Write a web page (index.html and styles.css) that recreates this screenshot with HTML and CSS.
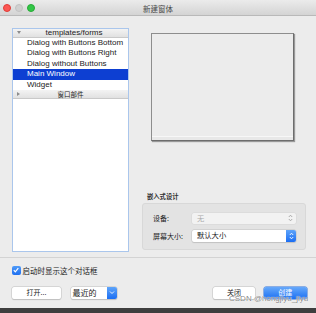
FILE: index.html
```html
<!DOCTYPE html>
<html lang="zh">
<head>
<meta charset="utf-8">
<title>新建窗体</title>
<link rel="stylesheet" href="styles.css">
</head>
<body>
<div class="window">
  <div class="titlebar">
    <div class="lights">
      <span class="light red"></span>
      <span class="light gray"></span>
      <span class="light green"></span>
    </div>
    <div class="title">新建窗体</div>
    <div></div>
  </div>

  <div class="main">
    <div class="list">
      <div class="list-header first"><span class="arrow down"></span><span class="header-text">templates/forms</span></div>
      <div class="row">Dialog with Buttons Bottom</div>
      <div class="row">Dialog with Buttons Right</div>
      <div class="row">Dialog without Buttons</div>
      <div class="row selected">Main Window</div>
      <div class="row">Widget</div>
      <div class="list-header"><span class="arrow right"></span><span class="header-text cjk">窗口部件</span></div>
    </div>

    <div class="side">
      <div class="preview"><div class="preview-status"></div></div>
      <div class="embed">
        <div class="embed-label">嵌入式设计</div>
        <div class="group">
          <div class="field">
            <span class="field-label">设备:</span>
            <div class="combo disabled">
              <span class="combo-text">无</span>
              <svg class="updown" width="5" height="8" viewBox="0 0 5 8"><path d="M0.8 3 L2.5 1.2 L4.2 3 M0.8 5 L2.5 6.8 L4.2 5" fill="none" stroke="#9a9a9a" stroke-width="0.8"/></svg>
            </div>
          </div>
          <div class="field">
            <span class="field-label">屏幕大小:</span>
            <div class="combo">
              <span class="combo-text">默认大小</span>
              <span class="stepper"><svg width="5" height="8" viewBox="0 0 5 8"><path d="M0.8 3 L2.5 1.2 L4.2 3 M0.8 5 L2.5 6.8 L4.2 5" fill="none" stroke="#fff" stroke-width="0.9"/></svg></span>
            </div>
          </div>
        </div>
      </div>
    </div>
  </div>

  <div class="separator"></div>

  <label class="check-row">
    <span class="checkbox"><svg width="8" height="8" viewBox="0 0 8 8"><path d="M1.8 4.2 L3.3 5.8 L6.3 2.2" fill="none" stroke="#fff" stroke-width="1.2"/></svg></span>
    <span class="check-label">启动时显示这个对话框</span>
  </label>

  <div class="buttons">
    <button class="btn open">打开...</button>
    <div class="recent">
      <span class="recent-text">最近的</span>
      <span class="recent-arrow"><svg width="6" height="5" viewBox="0 0 6 5"><path d="M1 1.5 L3 3.5 L5 1.5" fill="none" stroke="#fff" stroke-width="0.9"/></svg></span>
    </div>
    <div class="spacer"></div>
    <button class="btn close">关闭</button>
    <button class="btn create">创建</button>
  </div>

  <div class="watermark">CSDN @hongjiyu_jiyu</div>
</div>
</body>
</html>
```

FILE: styles.css
```css
* { box-sizing: border-box; }

html, body {
  margin: 0;
  padding: 0;
}

body {
  width: 316px;
  height: 313px;
  overflow: hidden;
  background: #3e3e3e;
  font-family: "Liberation Sans", "Noto Sans CJK SC", sans-serif;
  color: #222;
}

.window {
  position: relative;
  width: 316px;
  height: 308px;
  background: #ececec;
  display: flex;
  flex-direction: column;
}

.titlebar {
  height: 16px;
  background: linear-gradient(#ebebeb, #d4d4d4);
  border-bottom: 1px solid #b9b9b9;
  display: grid;
  grid-template-columns: 1fr auto 1fr;
  align-items: center;
}

.lights {
  display: flex;
  gap: 4px;
  padding-left: 3px;
  padding-top: 1px;
}

.light {
  width: 8px;
  height: 8px;
  border-radius: 50%;
}
.light.red { background: #fc5753; border: 0.5px solid #df3d39; }
.light.gray { background: #d0d0d0; border: 0.5px solid #c2c2c2; }
.light.green { background: #33c748; border: 0.5px solid #27aa36; }

.title {
  font-family: "Noto Sans CJK SC", sans-serif;
  font-size: 7.5px;
  color: #4a4a4a;
  padding-top: 1px;
}

.main {
  display: flex;
  padding: 12px 10px 0 12px;
}

.list {
  width: 117px;
  height: 224px;
  background: #fff;
  border: 1.5px solid #aac6ec;
  display: flex;
  flex-direction: column;
}

.list-header {
  position: relative;
  height: 9px;
  background: linear-gradient(#f3f3f3, #e1e1e1);
  border-bottom: 0.5px solid #c9c9c9;
  display: flex;
  align-items: center;
  justify-content: center;
  font-size: 8px;
  color: #222;
}
.list-header.first { padding-left: 7px; height: 8.5px; }
.list-header .cjk {
  font-family: "Noto Sans CJK SC", sans-serif;
  font-size: 6.5px;
  line-height: 1;
}

.arrow {
  position: absolute;
  left: 4px;
  top: 50%;
  width: 0;
  height: 0;
}
.arrow.down {
  margin-top: -1.5px;
  border-left: 2.5px solid transparent;
  border-right: 2.5px solid transparent;
  border-top: 3.5px solid #8c8c8c;
}
.arrow.right {
  margin-top: -2.5px;
  border-top: 2.5px solid transparent;
  border-bottom: 2.5px solid transparent;
  border-left: 3.5px solid #8c8c8c;
}

.row {
  height: 10.6px;
  line-height: 10.6px;
  padding-left: 14px;
  font-size: 8px;
  color: #222;
  white-space: nowrap;
}
.row.selected {
  background: #0d3fd2;
  color: #fff;
}

.side {
  width: 164px;
  margin-left: 13px;
  height: 224px;
  display: flex;
  flex-direction: column;
  justify-content: space-between;
  padding-bottom: 2px;
}

.preview {
  margin-top: 5px;
  margin-left: 8.5px;
  width: 143px;
  height: 108px;
  background: #ececec;
  border: 1px solid #8d8d8d;
  border-right: 1.5px solid #6d6d6d;
  border-bottom: 1.5px solid #6d6d6d;
  box-shadow: 1px 1px 1px rgba(0,0,0,0.35);
  display: flex;
  flex-direction: column;
  justify-content: flex-end;
}
.preview-status {
  height: 4px;
  border-top: 0.5px solid #f7f7f7;
  background: #e8e8e8;
}

.embed-label {
  font-family: "Noto Sans CJK SC", sans-serif;
  font-size: 6.3px;
  font-weight: 700;
  color: #333;
  padding-left: 5px;
  margin-bottom: 2px;
  line-height: 8px;
}

.group {
  height: 47px;
  background: #e3e3e3;
  border: 0.5px solid #d8d8d8;
  border-radius: 3px;
  padding: 8.5px 9px 0 10px;
  display: flex;
  flex-direction: column;
  gap: 6px;
}

.field {
  display: flex;
  align-items: center;
  justify-content: space-between;
  height: 11.5px;
}

.field-label {
  font-family: "Noto Sans CJK SC", sans-serif;
  font-size: 7px;
  color: #222;
}

.combo {
  width: 104px;
  height: 11.5px;
  background: #fff;
  border-radius: 2px;
  box-shadow: 0 0 0 0.5px #c4c4c4, 0 0.5px 1px rgba(0,0,0,0.15);
  display: flex;
  align-items: center;
  justify-content: space-between;
  padding-left: 5px;
  overflow: hidden;
}
.combo.disabled {
  background: #f2f2f2;
  box-shadow: 0 0 0 0.5px #d6d6d6;
  padding-right: 3px;
}
.combo-text {
  font-family: "Noto Sans CJK SC", sans-serif;
  font-size: 7.3px;
  color: #222;
  line-height: 1;
}
.combo.disabled .combo-text { color: #aaa; }

.updown { display: block; }

.stepper {
  width: 10px;
  height: 100%;
  background: linear-gradient(#5ea4fa, #1b6ef3);
  display: flex;
  align-items: center;
  justify-content: center;
}

.separator {
  margin-top: 5px;
  height: 1px;
  border-top: 0.5px solid #d3d3d3;
  background: #f2f2f2;
}

.check-row {
  display: flex;
  align-items: center;
  gap: 2px;
  margin-top: 8px;
  padding-left: 12px;
  height: 8.5px;
}

.checkbox {
  width: 8.5px;
  height: 8.5px;
  border-radius: 2px;
  background: linear-gradient(#4f9bf8, #1e6ff0);
  display: flex;
  align-items: center;
  justify-content: center;
}

.check-label {
  font-family: "Noto Sans CJK SC", sans-serif;
  font-size: 7.5px;
  color: #222;
}

.buttons {
  display: flex;
  align-items: center;
  margin-top: 12.5px;
  padding: 0 9.5px 0 12px;
  height: 11.5px;
}

.btn {
  font-family: "Noto Sans CJK SC", "Liberation Sans", sans-serif;
  font-size: 7px;
  height: 11.5px;
  line-height: 1;
  padding: 0;
  border: none;
  border-radius: 2px;
  background: #fff;
  color: #222;
  box-shadow: 0 0 0 0.5px #c4c4c4, 0 0.5px 1px rgba(0,0,0,0.2);
  display: flex;
  align-items: center;
  justify-content: center;
}
.btn.open { width: 49px; }
.btn.close { width: 42px; }
.btn.create {
  width: 42.5px;
  margin-left: 9px;
  background: linear-gradient(#66a9fb, #1b6ff2);
  color: #fff;
  box-shadow: 0 0 0 0.5px #2a6fd9;
}

.recent {
  margin-left: 9.5px;
  width: 46.5px;
  height: 11.5px;
  background: #fff;
  border-radius: 2px;
  box-shadow: 0 0 0 0.5px #c4c4c4, 0 0.5px 1px rgba(0,0,0,0.2);
  display: flex;
  align-items: center;
  justify-content: space-between;
  overflow: hidden;
  padding-left: 2px;
}
.recent-text {
  font-family: "Noto Sans CJK SC", sans-serif;
  font-size: 8px;
  color: #222;
  line-height: 1;
}
.recent-arrow {
  width: 10px;
  height: 100%;
  background: linear-gradient(#5ea4fa, #1b6ef3);
  display: flex;
  align-items: center;
  justify-content: center;
}

.spacer { flex: 1; }

.watermark {
  position: absolute;
  left: 229px;
  top: 294px;
  font-size: 8px;
  color: rgba(90, 90, 90, 0.75);
  text-shadow: 0 0 1px #fff, 0 0 1px #fff;
  white-space: nowrap;
}
```
